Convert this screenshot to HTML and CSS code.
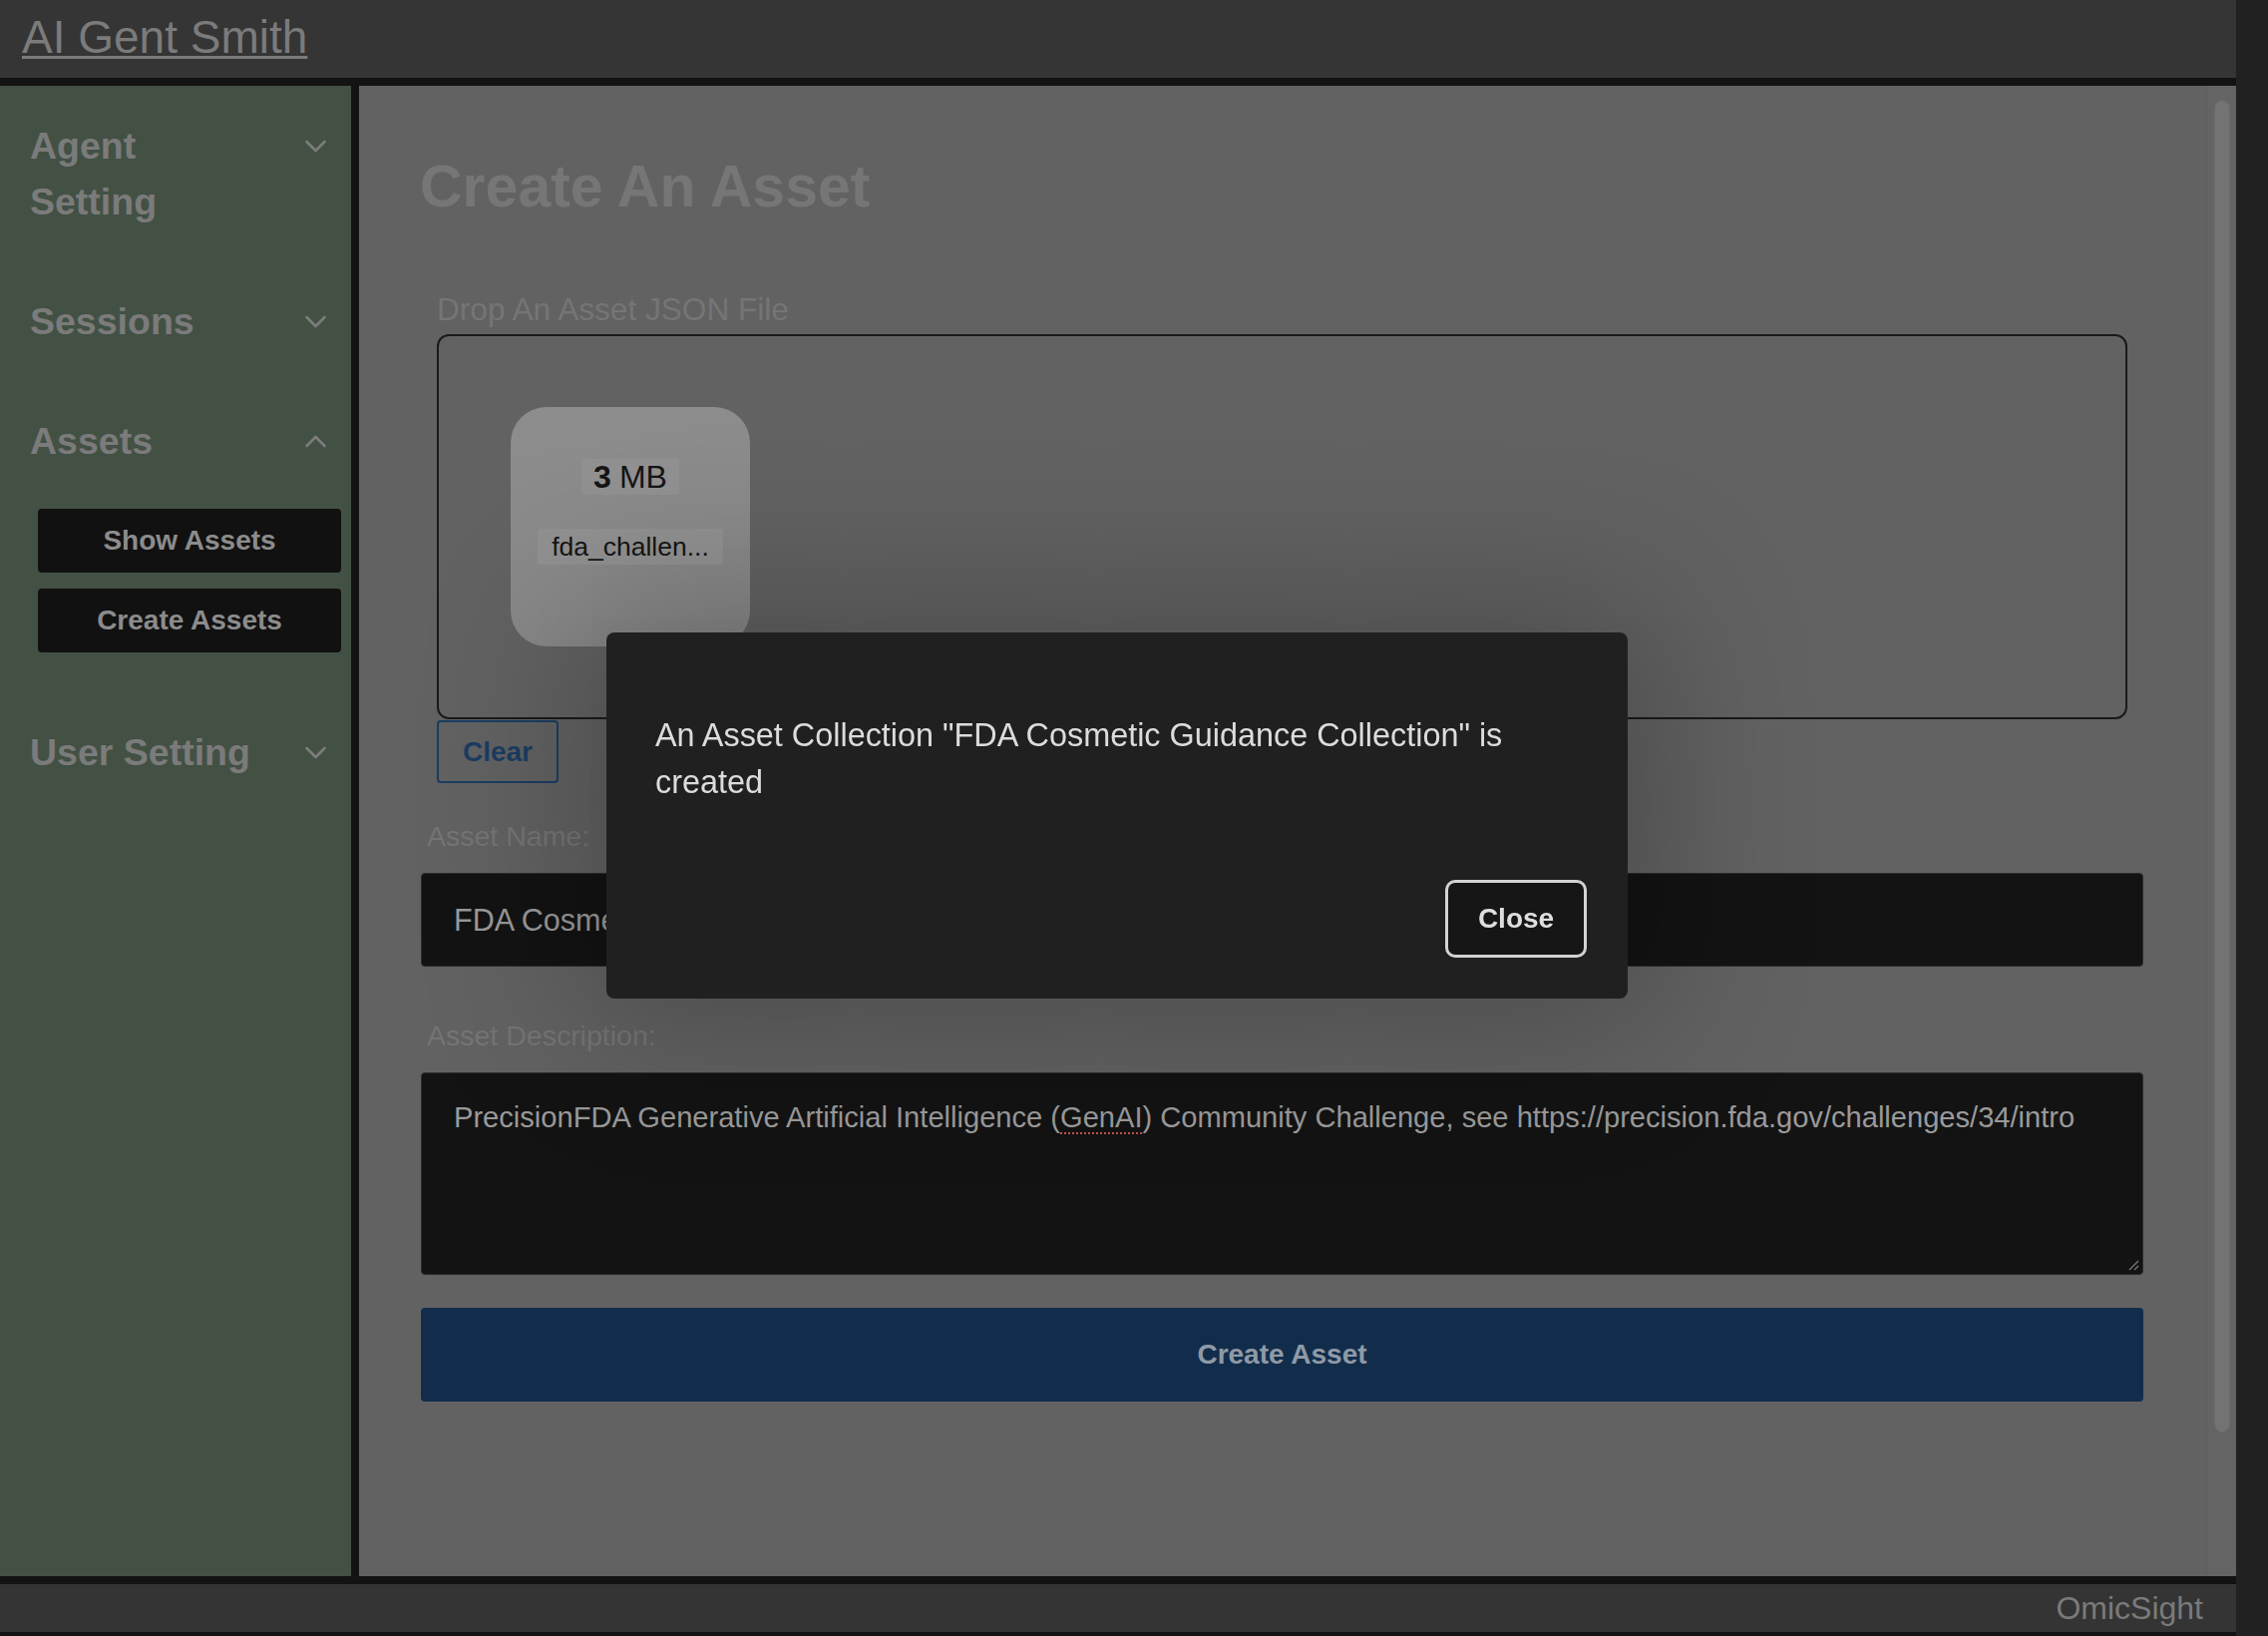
FILE: index.html
```html
<!DOCTYPE html>
<html lang="en">
<head>
<meta charset="utf-8">
<title>AI Gent Smith</title>
<link rel="stylesheet" href="styles.css">
</head>
<body>
<div class="app">
  <header class="topbar">
    <a class="brand" href="#">AI Gent Smith</a>
  </header>
  <div class="middle">
    <nav class="sidebar">
      <div class="section">
        <div class="section-head">
          <span class="section-title">Agent Setting</span>
          <svg class="chev" viewBox="0 0 22 13"><polyline points="2,2 11,11 20,2"/></svg>
        </div>
      </div>
      <div class="section">
        <div class="section-head">
          <span class="section-title">Sessions</span>
          <svg class="chev" viewBox="0 0 22 13"><polyline points="2,2 11,11 20,2"/></svg>
        </div>
      </div>
      <div class="section section-open">
        <div class="section-head">
          <span class="section-title">Assets</span>
          <svg class="chev" viewBox="0 0 22 13"><polyline points="2,11 11,2 20,11"/></svg>
        </div>
        <div class="submenu">
          <button class="sub-btn">Show Assets</button>
          <button class="sub-btn">Create Assets</button>
        </div>
      </div>
      <div class="section">
        <div class="section-head">
          <span class="section-title">User Setting</span>
          <svg class="chev" viewBox="0 0 22 13"><polyline points="2,2 11,11 20,2"/></svg>
        </div>
      </div>
    </nav>
    <div class="main-wrap">
      <main class="main">
        <h1 class="page-title">Create An Asset</h1>
        <section class="drop-section">
          <div class="drop-label">Drop An Asset JSON File</div>
          <div class="dropzone">
            <div class="file-card">
              <div class="file-tag file-size"><b>3</b> MB</div>
              <div class="file-tag file-name">fda_challen...</div>
            </div>
          </div>
          <button class="clear-btn">Clear</button>
        </section>
        <div class="field-label first">Asset Name:</div>
        <div class="text-input">FDA Cosmetic Guidance Collection</div>
        <div class="field-label">Asset Description:</div>
        <div class="text-area">PrecisionFDA Generative Artificial Intelligence (<span class="spell">GenAI</span>) Community Challenge, see https://precision.fda.gov/challenges/34/intro<svg class="grip" viewBox="0 0 12 12"><line x1="11" y1="2" x2="2" y2="11"/><line x1="11" y1="7" x2="7" y2="11"/></svg></div>
        <button class="create-btn">Create Asset</button>
      </main>
      <div class="scrollbar"><div class="thumb"></div></div>
    </div>
  </div>
  <footer class="footer"><span class="footer-brand">OmicSight</span></footer>
</div>

<div class="modal" role="dialog">
  <p class="modal-text">An Asset Collection "FDA Cosmetic Guidance Collection" is created</p>
  <div class="modal-actions">
    <button class="close-btn">Close</button>
  </div>
</div>
</body>
</html>
```

FILE: styles.css
```css
* { box-sizing: border-box; }

html, body {
  margin: 0;
  padding: 0;
}

body {
  width: 2274px;
  height: 1640px;
  background: #212121;
  font-family: "Liberation Sans", Arial, sans-serif;
  overflow: hidden;
}

button {
  font-family: "Liberation Sans", Arial, sans-serif;
  cursor: pointer;
}

.app {
  width: 2242px;
  height: 1640px;
  display: flex;
  flex-direction: column;
}

/* header */
.topbar {
  height: 86px;
  flex: none;
  background: #353535;
  border-bottom: 8px solid #131313;
  padding: 14px 0 0 22px;
}

.brand {
  font-size: 46px;
  line-height: 46px;
  color: #7b7b7b;
  text-decoration: underline;
  text-decoration-thickness: 3px;
  text-underline-offset: 3px;
}

/* middle */
.middle {
  flex: 1;
  display: flex;
  min-height: 0;
}

.sidebar {
  width: 360px;
  flex: none;
  background: #435144;
  border-right: 8px solid #131313;
  padding: 32px 24px 0 30px;
}

.section {
  margin-bottom: 64px;
}

.section-open {
  margin-bottom: 72px;
}

.section-head {
  display: flex;
  justify-content: space-between;
  align-items: flex-start;
}

.section-title {
  font-size: 37.5px;
  line-height: 56px;
  font-weight: bold;
  color: #7b7b7b;
  max-width: 232px;
}

.chev {
  width: 23px;
  height: 13px;
  margin-top: 22px;
  flex: none;
}

.chev polyline {
  fill: none;
  stroke: #7c7c7c;
  stroke-width: 2.6;
  stroke-linecap: round;
  stroke-linejoin: round;
}

.submenu {
  margin: 40px -14px 0 8px;
  display: flex;
  flex-direction: column;
  gap: 16px;
}

.sub-btn {
  height: 64px;
  border: none;
  border-radius: 4px;
  background: #111111;
  color: #8c8c8c;
  font-size: 28px;
  font-weight: bold;
}

/* main */
.main-wrap {
  flex: 1;
  display: flex;
  background: #626262;
  min-width: 0;
}

.main {
  flex: 1;
  padding: 66px 63px 0 62px;
  min-width: 0;
}

.page-title {
  margin: 0 0 0 -1px;
  font-size: 59px;
  line-height: 70px;
  font-weight: bold;
  color: #767676;
}

.drop-section {
  margin: 70px 16px 0;
}

.drop-label {
  font-size: 31.6px;
  line-height: 36px;
  color: #757575;
  margin-bottom: 7px;
}

.dropzone {
  height: 386px;
  border: 2px solid #1a1a1a;
  border-radius: 12px;
  padding: 71px 72px;
}

.file-card {
  width: 240px;
  height: 240px;
  border-radius: 36px;
  background: linear-gradient(170deg, #8d8d8d, #878787);
  display: flex;
  flex-direction: column;
  align-items: center;
  padding-top: 52px;
  gap: 34px;
}

.file-tag {
  height: 36px;
  border-radius: 3px;
  background: #919191;
  color: #151515;
  display: flex;
  align-items: center;
  white-space: nowrap;
}

.file-size {
  font-size: 32px;
  padding: 0 12px;
}

.file-size b {
  margin-right: 8px;
}

.file-name {
  font-size: 26.5px;
  padding: 0 14px;
}

.clear-btn {
  margin-top: 1px;
  width: 122px;
  height: 63px;
  border: 2px solid #1b3d63;
  border-radius: 4px;
  background: transparent;
  color: #1b3d63;
  font-size: 28px;
  font-weight: bold;
  padding: 0;
}

.field-label {
  margin: 52px 0 20px 6px;
  font-size: 28.5px;
  line-height: 34px;
  color: #757575;
}

.field-label.first {
  margin-top: 36px;
}

.text-input {
  height: 94px;
  background: #131313;
  border: 1px solid #2b2b2b;
  border-radius: 4px;
  padding: 0 32px;
  display: flex;
  align-items: center;
  font-size: 30.5px;
  color: #9a9a9a;
  white-space: nowrap;
  overflow: hidden;
}

.text-area {
  position: relative;
  height: 203px;
  background: #131313;
  border: 1px solid #2b2b2b;
  border-radius: 4px;
  padding: 26px 32px;
  font-size: 29.1px;
  line-height: 36px;
  color: #9a9a9a;
}

.spell {
  text-decoration: underline dotted #c4504a;
  text-decoration-thickness: 2px;
  text-underline-offset: 5px;
}

.grip {
  position: absolute;
  right: 3px;
  bottom: 3px;
  width: 12px;
  height: 12px;
}

.grip line {
  stroke: #777;
  stroke-width: 1.3;
}

.create-btn {
  display: block;
  width: 100%;
  margin-top: 33px;
  height: 94px;
  border: none;
  border-radius: 4px;
  background: #122d4c;
  color: #8f9aa6;
  font-size: 28px;
  font-weight: bold;
}

/* scrollbar */
.scrollbar {
  width: 30px;
  flex: none;
  background: #646464;
  border-left: 1px solid #5d5d5d;
  padding: 14px 6px 0 7px;
}

.thumb {
  height: 1336px;
  border-radius: 8px;
  background: #737373;
  border: 1px solid #6b6b6b;
}

/* footer */
.footer {
  height: 60px;
  flex: none;
  background: #343434;
  border-top: 8px solid #131313;
  border-bottom: 4px solid #131313;
  display: flex;
  justify-content: flex-end;
  align-items: center;
  padding-right: 33px;
}

.footer-brand {
  font-size: 32px;
  color: #7a7a7a;
}

/* modal dialog (overlay) */
.modal {
  position: fixed;
  left: 608px;
  top: 634px;
  width: 1024px;
  height: 367px;
  background: #202020;
  border-radius: 8px;
  padding: 80px 41px 41px 49px;
  display: flex;
  flex-direction: column;
  box-shadow: 0 0 160px 30px rgba(0, 0, 0, 0.24);
}

.modal-text {
  margin: 0;
  font-size: 32.4px;
  line-height: 47px;
  color: #dcdcdc;
}

.modal-actions {
  margin-top: auto;
  display: flex;
  justify-content: flex-end;
}

.close-btn {
  width: 142px;
  height: 78px;
  border: 3px solid #d3d3d3;
  border-radius: 10px;
  background: #161616;
  color: #dedede;
  font-size: 28px;
  font-weight: bold;
  padding: 0;
}
```
